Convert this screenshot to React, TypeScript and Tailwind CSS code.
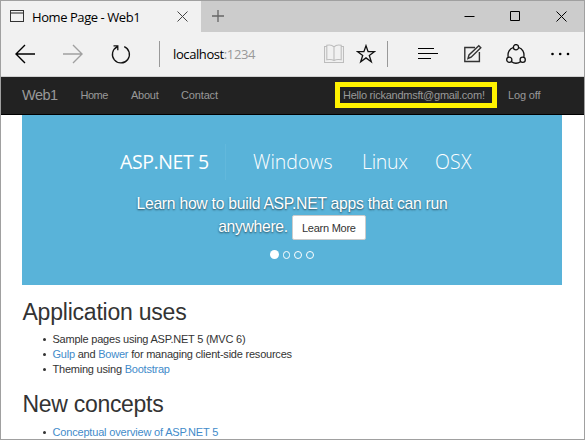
import React from "react";

const ui = "font-['Open_Sans','Noto_Sans',sans-serif]";

function TitleBar() {
  return (
    <div className={`flex h-[31px] shrink-0 bg-[#cccccc] ${ui}`}>
      <div className="flex w-[200px] items-center bg-[#f1f1f1] pl-[9px]">
        <svg className="h-[14px] w-[14px] shrink-0" viewBox="0 0 14 14" fill="none" stroke="#333">
          <rect x="0.5" y="0.5" width="13" height="11" />
          <path d="M1 2.5h12M1 3.5h12" stroke="#888" />
        </svg>
        <span className="ml-2 w-[140px] whitespace-nowrap pt-px text-[13px] leading-[18px] tracking-[-0.43px] text-black">Home Page - Web1</span>
        <svg className="ml-[5px] h-[11px] w-[11px] shrink-0" viewBox="0 0 11 11" stroke="#444">
          <path d="M.5 .5l10 10M10.5 .5l-10 10" />
        </svg>
      </div>
      <svg className="ml-[11px] mt-[9px] h-[12px] w-[12px]" viewBox="0 0 12 12" stroke="#666" strokeWidth="1.3">
        <path d="M0 6h12M6 0v12" />
      </svg>
      <div className="ml-auto mr-[17px] flex items-center gap-[35px]">
        <svg className="h-[11px] w-[11px]" viewBox="0 0 11 11" stroke="#000">
          <path d="M.5 5.5h10" />
        </svg>
        <svg className="h-[11px] w-[11px]" viewBox="0 0 11 11" stroke="#000" fill="none">
          <path d="M.5 .5h9v9h-9z" />
        </svg>
        <svg className="h-[11px] w-[11px]" viewBox="0 0 11 11" stroke="#000">
          <path d="M.5 .5l10 10M10.5 .5l-10 10" />
        </svg>
      </div>
    </div>
  );
}

function Toolbar() {
  return (
    <div className={`flex h-[45px] shrink-0 items-center border-b border-[#d0d0d0] bg-[#f1f1f1] pl-[14px] ${ui}`}>
      <svg className="h-[20px] w-[20px] shrink-0" viewBox="0 0 20 20" fill="none" stroke="#000" strokeWidth="1.4">
        <path d="M20 10H1M10 1L1 10l9 9" />
      </svg>
      <svg className="ml-[28px] h-[20px] w-[20px] shrink-0" viewBox="0 0 20 20" fill="none" stroke="#a0a0a0" strokeWidth="1.4">
        <path d="M0 10h19M10 1l9 9-9 9" />
      </svg>
      <svg className="ml-[28px] h-[20px] w-[20px] shrink-0" viewBox="0 0 20 20" fill="none" stroke="#111" strokeWidth="1.3">
        <path d="M13.2 2.6A8.5 8.5 0 1 1 6.2 2.8M2.5 1.8h4.3v4.4" />
      </svg>
      <div className="ml-[28px] h-[26px] w-px shrink-0 bg-[#999]" />
      <span className="ml-[13px] w-[120px] shrink-0 whitespace-nowrap text-[13px] leading-[18px] tracking-[-0.4px] text-[#999]">
        <span className="text-black">localhost</span>:1234
      </span>
      <svg className="ml-[31px] h-[20px] w-[20px] shrink-0" viewBox="0 0 20 20" fill="none" stroke="#bdbdbd" strokeWidth="1.1">
        <path d="M2.5 2.5H.5v16h19v-16h-2M10 16.5V2.8M10 2.8C8 .8 4.8.8 2.8 1.3v14.5c2.2-.5 5-.5 7.2.7 2.2-1.2 5-1.2 7.2-.7V1.3C15.2.8 12 .8 10 2.8M8.5 18.5h3" />
      </svg>
      <svg className="ml-[12px] h-[20px] w-[20px] shrink-0" viewBox="0 0 20 20" fill="none" stroke="#111" strokeWidth="1.3">
        <path d="M10 1.7l2.1 6h6.3l-5.1 3.8 2 6.3-5.3-3.9-5.3 3.9 2-6.3-5.1-3.8h6.3z" />
      </svg>
      <div className="ml-[11px] h-[26px] w-px shrink-0 bg-[#999]" />
      <svg className="ml-[30px] h-[12px] w-[20px] shrink-0" viewBox="0 0 20 12" stroke="#000">
        <path d="M0 .5h16M0 5.5h20M0 10.5h13" />
      </svg>
      <svg className="ml-[26px] h-[20px] w-[18px] shrink-0" viewBox="0 0 18 20" fill="none" stroke="#333" strokeWidth="1.4">
        <path d="M11 3.5H.8v14H15.4V8M4 14.5l1-3.5L14.8 1.7l2 2L7.1 13.2z" />
      </svg>
      <svg className="ml-[24px] h-[20px] w-[20px] shrink-0" viewBox="0 0 20 20" fill="none" stroke="#111" strokeWidth="1.3">
        <path d="M7.3 3.5C3.8 4.5 1.3 8.5 2.2 13M12.7 3.5c3.5 1 6 5 5.1 9.5M5.2 17.5c3 2.2 6.6 2.2 9.6 0" />
        <circle cx="10" cy="3.2" r="2.6" />
        <circle cx="3.3" cy="15.8" r="2.6" />
        <circle cx="16.7" cy="15.8" r="2.6" />
      </svg>
      <svg className="ml-[25px] h-[4px] w-[19px] shrink-0" viewBox="0 0 19 4" fill="#000">
        <circle cx="1.5" cy="2" r="1.3" />
        <circle cx="9.2" cy="2" r="1.3" />
        <circle cx="17" cy="2" r="1.3" />
      </svg>
    </div>
  );
}

function SiteNav() {
  return (
    <nav className="flex h-[38px] shrink-0 items-center whitespace-nowrap border-b border-black bg-[#222] pb-px pl-[21px] text-[11px] leading-[14px] text-[#999]">
      <span className="w-[58.5px] text-[14.5px] tracking-[-0.5px]">Web1</span>
      <span className="w-[50.5px] tracking-[-0.5px]">Home</span>
      <span className="w-[50px] tracking-[-0.25px]">About</span>
      <span className="w-[154px] tracking-[-0.15px]">Contact</span>
      <span className="flex h-[26px] w-[162px] items-center border-[5px] border-[#fff200] pl-[3px] tracking-[-0.25px]">
        <span>Hello rickandmsft@gmail.com!</span>
      </span>
      <span className="ml-[11px] tracking-[-0.15px]">Log off</span>
    </nav>
  );
}

function Carousel() {
  return (
    <section className="mx-[21px] h-[170px] w-[540px] shrink-0 bg-[#59b3d9] pt-[29px] text-white">
      <div className={`flex h-[36px] items-center whitespace-nowrap pl-[98px] text-[19.5px] font-light ${ui}`}>
        <span className="w-[105px] font-normal tracking-[-0.4px]">ASP.NET 5</span>
        <span className="h-[36px] w-px bg-[#62b8dc]" />
        <span className="ml-[27px] w-[109px]">Windows</span>
        <span className="w-[73px] tracking-[-0.3px]">Linux</span>
        <span className="tracking-[0.2px]">OSX</span>
      </div>
      <div className="mt-[13px] whitespace-nowrap text-center text-[15.7px] leading-[22px] tracking-[-0.25px] [text-shadow:0_1px_2px_rgba(0,0,0,0.6)]">
        <p>Learn how to build ASP.NET apps that can run</p>
        <p className="flex h-[25px] items-center justify-center gap-[4px]">
          <span className="pb-[2px] tracking-[-0.3px]">anywhere.</span>
          <button className="h-[25px] w-[74px] rounded-[2px] border border-[#ccc] bg-white text-[11px] leading-[22px] tracking-[-0.25px] text-[#333] [text-shadow:none]">
            Learn More
          </button>
        </p>
      </div>
      <div className="mt-[10px] flex items-center justify-center gap-[4px]">
        <i className="h-[9px] w-[9px] rounded-full bg-white" />
        <i className="h-[8px] w-[7px] rounded-full border border-white" />
        <i className="h-[8px] w-[8px] rounded-full border border-white" />
        <i className="h-[8px] w-[8px] rounded-full border border-white" />
      </div>
    </section>
  );
}

function Item({ children }: { children: React.ReactNode }) {
  return (
    <li className="flex h-[15px] items-center whitespace-nowrap">
      <i className="mr-[6.5px] h-[3px] w-[3px] rounded-full bg-[#333]" />
      <span>{children}</span>
    </li>
  );
}

function Link({ children }: { children: React.ReactNode }) {
  return <a className="text-[#428bca]">{children}</a>;
}

export default function App() {
  return (
    <div className="flex h-[440px] w-[585px] flex-col overflow-hidden border border-[#a0a0a0] bg-white font-['Liberation_Sans',Arial,sans-serif] text-[#333]">
      <TitleBar />
      <Toolbar />
      <SiteNav />
      <Carousel />
      <main className="shrink-0 pl-[21.5px]">
        <h2 className="mt-[14px] h-[26px] text-[23px] leading-[26px] tracking-[-0.22px]">Application uses</h2>
        <ul className="mt-[7px] pl-[20.5px] text-[11px] leading-[15px] tracking-[-0.22px]">
          <Item>Sample pages using ASP.NET 5 (MVC 6)</Item>
          <Item><Link>Gulp</Link> and <Link>Bower</Link> for managing client-side resources</Item>
          <Item>Theming using <Link>Bootstrap</Link></Item>
        </ul>
        <h2 className="mt-[14px] h-[26px] text-[23px] leading-[26px] tracking-[-0.3px]">New concepts</h2>
        <ul className="mt-[8px] pl-[20.5px] text-[11px] leading-[15px] tracking-[-0.18px]">
          <Item><Link>Conceptual overview of ASP.NET 5</Link></Item>
        </ul>
      </main>
    </div>
  );
}
